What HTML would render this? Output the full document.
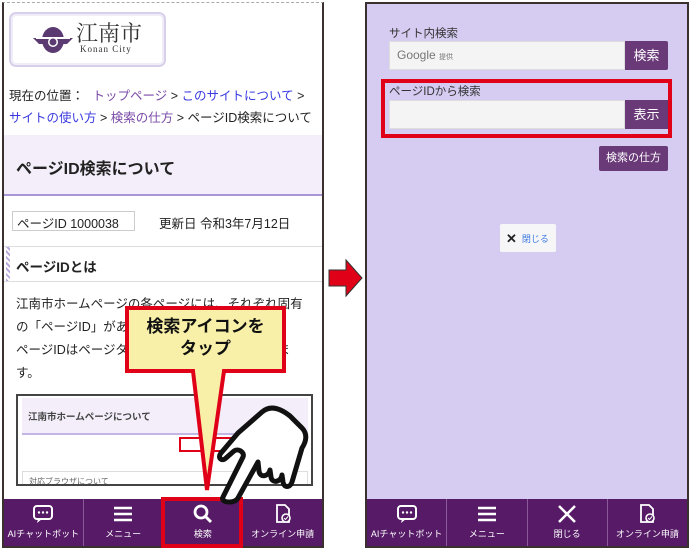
<!DOCTYPE html>
<html><head><meta charset="utf-8"><style>
*{box-sizing:border-box;margin:0;padding:0}
body{width:690px;height:549px;position:relative;background:#fff;font-family:"Liberation Sans","Noto Sans CJK JP",sans-serif;overflow:hidden;color:#222}
.abs{position:absolute}
.nav{position:absolute;left:0;right:0;bottom:0;height:47px;background:#561a66;display:flex}
.nav div{flex:1;color:#fff;font-size:9px;text-align:center;position:relative;padding-top:5px;white-space:nowrap}
.nav div+div{border-left:1px solid #8a5a98}
.nav svg{display:block;margin:0 auto 3px}
a{color:#3a3ae0}
</style></head><body>

<!-- left phone -->
<div class="abs" style="left:2px;top:2px;width:322px;height:546px;border:2px solid #3a3030;border-top:1px dashed #aaa;overflow:hidden;background:#fff">
 <div class="abs" style="left:5px;top:9px;width:157px;height:55px;border:2px solid #d8d0ea;border-radius:7px;background:#fff;box-shadow:inset 0 0 0 2px #f1edf8"></div>
 <svg class="abs" style="left:28px;top:20px" width="42" height="34" viewBox="0 0 42 34"><ellipse cx="21" cy="17" rx="11" ry="13" fill="#5b3a72"/><path d="M1 15h40l-6 6H7z" fill="#5b3a72"/><rect x="4" y="14" width="34" height="2" fill="#fff"/><circle cx="21" cy="19" r="5" fill="#fff"/><circle cx="21" cy="19" r="3.5" fill="#5b3a72"/></svg>
 <div class="abs" style="left:72px;top:14px;font-size:22px;font-family:'Noto Serif CJK SC',serif;color:#333">江南市</div>
 <div class="abs" style="left:76px;top:41px;font-size:9px;font-family:'Liberation Serif',serif;color:#333;letter-spacing:1px">Konan City</div>
 <div class="abs" style="left:5px;top:82px;font-size:12.5px;line-height:22px;width:310px">現在の位置： <a style="color:#7a4aa8;margin-left:5px">トップページ</a> &gt; <a>このサイトについて</a> &gt;<br><a>サイトの使い方</a> &gt; <a style="color:#7a4aa8">検索の仕方</a> &gt; ページID検索について</div>
 <div class="abs" style="left:0;top:132px;width:320px;height:61px;background:#f3eef9;border-bottom:2px solid #a996d6"></div>
 <div class="abs" style="left:12px;top:152px;font-size:16px;font-weight:bold">ページID検索について</div>
 <div class="abs" style="left:8px;top:208px;width:123px;height:20px;border:1px solid #ccc;font-size:12.5px;padding:1px 4px">ページID 1000038</div>
 <div class="abs" style="left:155px;top:210px;font-size:12.5px">更新日 令和3年7月12日</div>
 <div class="abs" style="left:0;top:243px;width:320px;height:36px;border-top:1px solid #ddd;border-bottom:1px solid #ddd"></div>
 <div class="abs" style="left:2px;top:244px;width:4px;height:34px;background:repeating-linear-gradient(45deg,#b9a8e0 0 2px,#fff 2px 4px)"></div>
 <div class="abs" style="left:12px;top:253px;font-size:13.5px;font-weight:bold">ページIDとは</div>
 <div class="abs" style="left:12px;top:290px;font-size:12.5px;line-height:23px;width:289px">江南市ホームページの各ページには、それぞれ固有の「ページID」があります。<br>ページIDはページタイトルの下に表示されています。</div>
 <div class="abs" style="left:12px;top:391px;width:297px;height:92px;border:2px solid #444;background:#fff;overflow:hidden">
  <div class="abs" style="left:4px;top:2px;width:286px;height:37px;background:#f3eef9;border-bottom:2px solid #c4b6e4"></div>
  <div class="abs" style="left:10px;top:13px;font-size:9.5px;font-weight:bold;color:#444">江南市ホームページについて</div>
  <div class="abs" style="left:161px;top:41px;width:55px;height:15px;border:2px solid #e00018"></div>
  <div class="abs" style="left:4px;top:75px;width:286px;height:20px;border:1px solid #ddd;font-size:8px;padding:4px 6px;color:#666">対応ブラウザについて</div>
 </div>
 <div class="nav">
  <div><svg width="22" height="20" viewBox="0 0 22 20"><rect x="2" y="2" width="18" height="13" rx="3" fill="none" stroke="#fff" stroke-width="2"/><path d="M6 15l-1 4 5-4" fill="#fff"/><circle cx="7" cy="8.5" r="1.2" fill="#fff"/><circle cx="11" cy="8.5" r="1.2" fill="#fff"/><circle cx="15" cy="8.5" r="1.2" fill="#fff"/></svg>AIチャットボット</div>
  <div><svg width="22" height="20" viewBox="0 0 22 20"><path d="M2 4h18M2 10h18M2 16h18" stroke="#fff" stroke-width="2.5"/></svg>メニュー</div>
  <div><svg width="22" height="20" viewBox="0 0 22 20"><circle cx="9" cy="8" r="6" fill="none" stroke="#fff" stroke-width="2.8"/><path d="M13 12l6 6" stroke="#fff" stroke-width="3"/></svg>検索</div>
  <div><svg width="22" height="20" viewBox="0 0 22 20"><path d="M5 1h8l4 4v13H5z" fill="none" stroke="#fff" stroke-width="1.8"/><circle cx="14" cy="14" r="4" fill="#561a66" stroke="#fff" stroke-width="1.6"/><path d="M12 14l1.5 1.5 2.5-3" stroke="#fff" fill="none"/></svg>オンライン申請</div>
 </div>
</div>

<!-- callout -->
<svg class="abs" style="left:120px;top:300px" width="200" height="250" viewBox="120 300 200 250">
 <path d="M127 308H284V371H224L207 490L193 371H127Z" fill="#f8f0a8" stroke="#e00018" stroke-width="4" stroke-linejoin="miter"/>
 <rect x="163" y="499" width="78" height="47" fill="none" stroke="#e00018" stroke-width="4"/>
 <path d="M223 497 L243 457 C245 452 238 448 234 451 L226 458 C222 462 217 458 221 453 L238 433 L262 412 C270 405 280 408 290 416 L302 428 C308 434 306 442 302 448 L292 482 C290 488 284 488 283 482 L282 475 C281 482 272 484 271 477 L270 470 C268 477 260 478 259 471 L258 462 L238 498 C235 504 220 503 223 497Z" fill="#fff" stroke="#111" stroke-width="5" stroke-linejoin="round"/>
</svg>
<div class="abs" style="left:128px;top:316px;width:155px;text-align:center;font-size:17px;font-weight:bold;line-height:22px;color:#111">検索アイコンを<br>タップ</div>

<!-- arrow -->
<svg class="abs" style="left:328px;top:258px" width="36" height="40" viewBox="0 0 36 40"><path d="M1 12H18V2L34 20L18 38V28H1Z" fill="#e00018" stroke="#333" stroke-width="1"/></svg>

<!-- right phone -->
<div class="abs" style="left:365px;top:2px;width:324px;height:546px;border:2px solid #3a3030;background:#d6cbf1;overflow:hidden">
 <div class="abs" style="left:22px;top:21px;font-size:11.5px;color:#333">サイト内検索</div>
 <div class="abs" style="left:22px;top:37px;width:236px;height:29px;background:#f4f4f4;border:1px solid #ddd;font-size:12px;color:#777;padding:6px 7px"><b style="font-weight:normal;letter-spacing:0">Google</b> <span style="font-size:7px">提供</span></div>
 <div class="abs" style="left:258px;top:37px;width:43px;height:29px;background:#6a3a78;color:#fff;font-size:13px;text-align:center;line-height:29px;border-radius:0 2px 2px 0">検索</div>
 <div class="abs" style="left:14px;top:75px;width:291px;height:59px;border:4px solid #e00018"></div>
 <div class="abs" style="left:22px;top:79px;font-size:11.5px;color:#333">ページIDから検索</div>
 <div class="abs" style="left:22px;top:96px;width:236px;height:29px;background:#f4f4f4;border:1px solid #ddd"></div>
 <div class="abs" style="left:258px;top:96px;width:43px;height:29px;background:#6a3a78;color:#fff;font-size:13px;text-align:center;line-height:29px">表示</div>
 <div class="abs" style="left:232px;top:142px;width:69px;height:25px;background:#6a3a78;color:#fff;font-size:11px;text-align:center;line-height:25px;border-radius:2px">検索の仕方</div>
 <div class="abs" style="left:133px;top:220px;width:56px;height:28px;background:#f6f6f8;border-radius:2px;font-size:9px;color:#3a7ae0;padding:7px 0 0 6px"><b style="color:#222;font-size:13px;vertical-align:-1px">✕</b>&nbsp; 閉じる</div>
 <div class="nav">
  <div><svg width="22" height="20" viewBox="0 0 22 20"><rect x="2" y="2" width="18" height="13" rx="3" fill="none" stroke="#fff" stroke-width="2"/><path d="M6 15l-1 4 5-4" fill="#fff"/><circle cx="7" cy="8.5" r="1.2" fill="#fff"/><circle cx="11" cy="8.5" r="1.2" fill="#fff"/><circle cx="15" cy="8.5" r="1.2" fill="#fff"/></svg>AIチャットボット</div>
  <div><svg width="22" height="20" viewBox="0 0 22 20"><path d="M2 4h18M2 10h18M2 16h18" stroke="#fff" stroke-width="2.5"/></svg>メニュー</div>
  <div><svg width="22" height="20" viewBox="0 0 22 20"><path d="M3 2l16 16M19 2L3 18" stroke="#fff" stroke-width="2.5"/></svg>閉じる</div>
  <div><svg width="22" height="20" viewBox="0 0 22 20"><path d="M5 1h8l4 4v13H5z" fill="none" stroke="#fff" stroke-width="1.8"/><circle cx="14" cy="14" r="4" fill="#561a66" stroke="#fff" stroke-width="1.6"/><path d="M12 14l1.5 1.5 2.5-3" stroke="#fff" fill="none"/></svg>オンライン申請</div>
 </div>
</div>
</body></html>
